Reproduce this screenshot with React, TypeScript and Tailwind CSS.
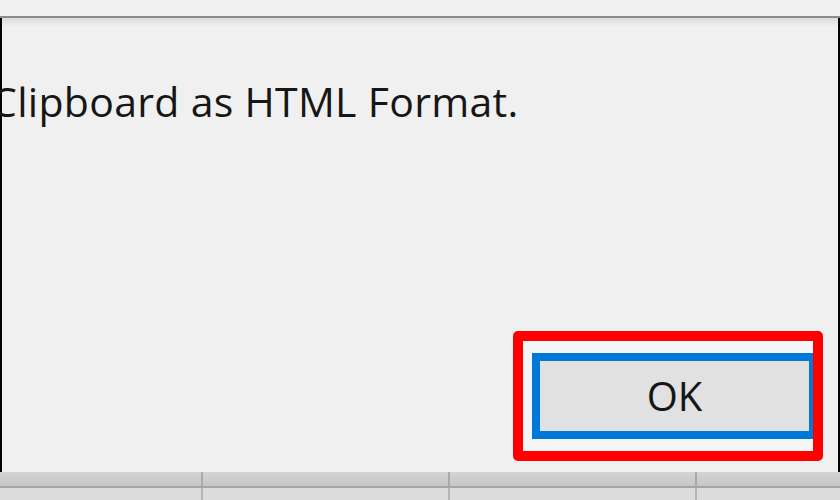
import React from 'react';

export default function App() {
  return (
    <div
      className="w-[840px] h-[500px] flex flex-col bg-[#f0f0f0] overflow-hidden text-[#161616]"
      style={{ fontFamily: '"Open Sans", "Noto Sans", sans-serif' }}
    >
      {/* strip above the dialog */}
      <div className="h-[16px] shrink-0 bg-[#f1f1f1]" />
      <div className="h-[2px] shrink-0 bg-[#8c8c8c]" />

      {/* dialog body */}
      <div className="flex-1 flex flex-col border-l-2 border-r-2 border-black bg-gradient-to-b from-[#dcdcdc] via-[#f0f0f0] via-[2%] to-[#f0f0f0]">
        <div className="mt-[57px] -ml-[11px] text-[41px] font-medium leading-[52px] tracking-[0.3px] whitespace-nowrap">
          Clipboard as HTML Format.
        </div>

        <div className="flex-1" />

        <div className="flex justify-end pr-[15px] pb-[11px]">
          <div className="w-[310px] h-[130px] border-[10px] border-[#ff0000] rounded-[5px] pl-[9px] pt-[12px] pb-[12px] flex bg-[#f3f5f7]">
            <div className="flex-1 border-l-[8px] border-t-[8px] border-b-[8px] border-r-[4px] border-[#0078d7] bg-[#e1e1e1] flex items-center justify-center">
              <span className="text-[40px] font-medium leading-none">OK</span>
            </div>
          </div>
        </div>
      </div>

      {/* spreadsheet header strip below */}
      <div className="h-[28px] shrink-0 flex flex-col">
        <div className="h-[14px] bg-gradient-to-b from-[#d4d4d4] to-[#c6c6c6] flex">
          <div className="w-[203px] border-r-2 border-[#a9a9a9]" />
          <div className="w-[247px] border-r-2 border-[#a9a9a9]" />
          <div className="w-[247px] border-r-2 border-[#a9a9a9]" />
          <div className="flex-1" />
        </div>
        <div className="h-[2px] bg-[#a5a5a5]" />
        <div className="flex-1 bg-[#dcdcdc] flex">
          <div className="w-[203px] border-r-2 border-[#b5b5b5]" />
          <div className="w-[247px] border-r-2 border-[#b5b5b5]" />
          <div className="w-[247px] border-r-2 border-[#b5b5b5]" />
          <div className="flex-1" />
        </div>
      </div>
    </div>
  );
}
